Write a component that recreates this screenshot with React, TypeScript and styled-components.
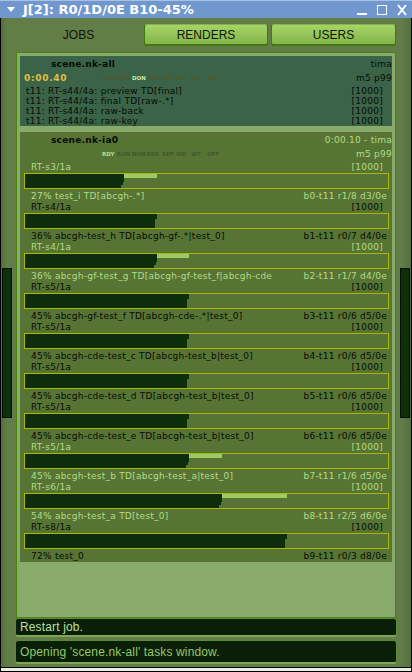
import React from "react";
import styled, { createGlobalStyle } from "styled-components";

const GlobalStyle = createGlobalStyle`
  html, body {
    margin: 0;
    padding: 0;
    background: #000;
  }
  #root {
    width: 412px;
    height: 672px;
  }
`;

const Window = styled.div`
  width: 412px;
  height: 672px;
  box-sizing: border-box;
  display: flex;
  flex-direction: column;
  background: #000;
  overflow: hidden;
  padding: 0 1px;
`;

const TitleBar = styled.div`
  height: 18px;
  flex: none;
  display: flex;
  align-items: center;
  background: #7198ce;
  color: #fff;
  border-top: 1px solid #a9c2e4;
  box-sizing: border-box;
  padding: 0 5px 0 7px;
  margin: 0 -1px;
`;

const TitleText = styled.div`
  font: bold 13px "DejaVu Sans", sans-serif;
  letter-spacing: 0;
  margin-left: 8px;
  flex: 1;
  white-space: nowrap;
`;

const TitleButtons = styled.div`
  display: flex;
  align-items: center;
  gap: 10px;
`;

const Body = styled.div`
  flex: 1;
  display: flex;
  background: linear-gradient(90deg, #566f3f 0, #637d48 6px, #637d48 400px, #566f3f 410px);
  min-height: 0;
`;

const Rail = styled.div`
  width: 10px;
  height: 150px;
  margin: 250px 1px 0 1px;
  flex: none;
  box-sizing: border-box;
  border: 1px solid #050f04;
  background: #0f2f0c;
  &:first-child {
    margin-right: 4px;
  }
  &:last-child {
    margin-left: 4px;
  }
`;

const Center = styled.div`
  flex: 1;
  min-width: 0;
  display: flex;
  flex-direction: column;
  padding-top: 6px;
`;

const Tabs = styled.div`
  height: 22px;
  display: flex;
  gap: 3px;
  flex: none;
`;

const Tab = styled.div<{ $active?: boolean }>`
  width: 125px;
  height: 22px;
  box-sizing: border-box;
  display: flex;
  align-items: center;
  justify-content: center;
  font: 12px "Liberation Sans", sans-serif;
  color: #0c160a;
  border-radius: 3px;
  &:nth-child(2) {
    width: 124px;
  }
  ${(p) =>
    p.$active
      ? `
    background: none;
  `
      : `
    background: linear-gradient(#a6d466, #84b44a);
    border: 1px solid #3f7a0c;
    border-top-color: #86b34a;
    border-bottom: 2px solid #3f7a0c;
  `}
`;

const ListFrame = styled.div`
  height: 566px;
  margin-top: 6px;
  flex: none;
  box-sizing: border-box;
  border: 1px solid #4c8412;
  background: #88ab6b;
  padding: 3px;
  display: flex;
  flex-direction: column;
  gap: 6px;
`;

const Card = styled.div<{ $tone: "dark" | "olive" }>`
  background: ${(p) => (p.$tone === "dark" ? "#3a6347" : "#587435")};
  font: 9px "DejaVu Sans", sans-serif;
  letter-spacing: 0.25px;
  color: #000;
  padding: 0 0 1px;
`;

const CardHead = styled.div`
  display: flex;
  justify-content: space-between;
  align-items: center;
  height: 15px;
  box-sizing: border-box;
  padding: 1px 0 0 31px;
`;

const CardName = styled.div`
  font: bold 9px "DejaVu Sans", sans-serif;
  letter-spacing: 0.25px;
  color: #060c04;
`;

const CardMeta = styled.div<{ $light?: boolean }>`
  color: ${(p) => (p.$light ? "#b2dc88" : "#060c04")};
`;

const StateRow = styled.div`
  display: flex;
  align-items: center;
  height: 14px;
`;

const Timer = styled.div`
  width: 82px;
  flex: none;
  padding-left: 4px;
  box-sizing: border-box;
  font: bold 9px "DejaVu Sans", sans-serif;
  letter-spacing: 0.7px;
  color: #e4bd43;
`;

const States = styled.div`
  flex: 1;
  display: flex;
  font: bold 5.5px "DejaVu Sans", sans-serif;
  letter-spacing: 0;
`;

const State = styled.span<{ $color: string; $w: number }>`
  color: ${(p) => p.$color};
  width: ${(p) => p.$w}px;
  flex: none;
`;

const Task = styled.div`
  display: flex;
  justify-content: space-between;
  height: 10px;
  line-height: 12px;
  padding: 0 9px 0 6px;
  color: #060c04;
`;

const JobBlock = styled.div<{ $light: boolean }>`
  color: ${(p) => (p.$light ? "#b2dc88" : "#060c04")};
`;

const JobLine = styled.div`
  display: flex;
  justify-content: space-between;
  height: 10px;
  line-height: 12px;
  margin-bottom: 2px;
  padding: 0 9px 0 11px;
`;

const JobFoot = styled(JobLine)`
  padding-right: 5px;
  height: 12px;
  line-height: 14px;
  margin-bottom: 0;
`;

const Bar = styled.div`
  width: 365px;
  height: 16px;
  margin: 0 0 0 4px;
  box-sizing: border-box;
  border: 1px solid #a8b80a;
  position: relative;
  background: #587435;
`;

const BarDone = styled.div<{ $width: number; $top: number; $height: number }>`
  position: absolute;
  left: 0;
  top: ${(p) => p.$top}px;
  height: ${(p) => p.$height}px;
  width: ${(p) => p.$width}px;
  background: #0e2d0b;
`;

const BarRun = styled.div<{ $left: number; $width: number }>`
  position: absolute;
  top: 0;
  height: 4px;
  left: ${(p) => p.$left}px;
  width: ${(p) => p.$width}px;
  background: #9ccc62;
`;

const Notice = styled.div<{ $tall?: boolean; $light?: boolean }>`
  height: ${(p) => (p.$tall ? 24 : 19)}px;
  box-sizing: border-box;
  flex: none;
  display: flex;
  align-items: center;
  margin: ${(p) => (p.$tall ? 3 : 0)}px -1px 0;
  padding-left: 4px;
  font: 12px "Liberation Sans", sans-serif;
  letter-spacing: 0.14px;
  background: #0b1f08;
  border: 1px solid #5d8a3a;
  border-bottom: 2px solid #7da655;
  border-radius: 3px;
  color: ${(p) => (p.$light ? "#96c86a" : "#bddf9c")};
`;

const BottomEdge = styled.div`
  height: 3px;
  flex: none;
  background: #e8efe0;
  margin: 1px 0 1px;
`;

const pctWidth = (pct: number) => Math.round((363 * pct) / 100);

const tasks = ["preview TD[final]", "final TD[raw-.*]", "raw-back", "raw-key"];

const stateLabels: [string, number][] = [
  ["RDY", 15],
  ["RUN", 15],
  ["DON", 15],
  ["ERR", 15],
  ["SEP", 14],
  ["WD", 15],
  ["WT", 16],
  ["OFF", 14],
];

type Job = {
  host: string;
  pct: number;
  runTo?: number;
  name: string;
  info: string;
  light?: boolean;
};

const jobs: Job[] = [
  { host: "RT-s3/1a", pct: 27, runTo: 36, name: "test_i TD[abcgh-.*]", info: "b0-t11 r1/8 d3/0e", light: true },
  { host: "RT-s4/1a", pct: 36, name: "abcgh-test_h TD[abcgh-gf-.*|test_0]", info: "b1-t11 r0/7 d4/0e" },
  { host: "RT-s4/1a", pct: 36, runTo: 45, name: "abcgh-gf-test_g TD[abcgh-gf-test_f|abcgh-cde", info: "b2-t11 r1/7 d4/0e", light: true },
  { host: "RT-s5/1a", pct: 45, name: "abcgh-gf-test_f TD[abcgh-cde-.*|test_0]", info: "b3-t11 r0/6 d5/0e" },
  { host: "RT-s5/1a", pct: 45, name: "abcgh-cde-test_c TD[abcgh-test_b|test_0]", info: "b4-t11 r0/6 d5/0e" },
  { host: "RT-s5/1a", pct: 45, name: "abcgh-cde-test_d TD[abcgh-test_b|test_0]", info: "b5-t11 r0/6 d5/0e" },
  { host: "RT-s5/1a", pct: 45, name: "abcgh-cde-test_e TD[abcgh-test_b|test_0]", info: "b6-t11 r0/6 d5/0e" },
  { host: "RT-s5/1a", pct: 45, runTo: 54, name: "abcgh-test_b TD[abcgh-test_a|test_0]", info: "b7-t11 r1/6 d5/0e", light: true },
  { host: "RT-s6/1a", pct: 54, runTo: 72, name: "abcgh-test_a TD[test_0]", info: "b8-t11 r2/5 d6/0e", light: true },
  { host: "RT-s8/1a", pct: 72, name: "test_0", info: "b9-t11 r0/3 d8/0e" },
];

const ProgressBar = ({ pct, runTo }: { pct: number; runTo?: number }) => {
  const w = pctWidth(pct);
  if (runTo) {
    return (
      <Bar>
        <BarDone $top={0} $height={8} $width={w + 1} />
        <BarDone $top={8} $height={3} $width={w} />
        <BarDone $top={11} $height={3} $width={w - 2} />
        <BarRun $left={w + 1} $width={pctWidth(runTo) - w} />
      </Bar>
    );
  }
  return (
    <Bar>
      <BarDone $top={0} $height={5} $width={w + 1} />
      <BarDone $top={5} $height={9} $width={w - 1} />
    </Bar>
  );
};

const App = () => (
  <>
    <GlobalStyle />
    <Window>
      <TitleBar>
        <svg width="8" height="6" viewBox="0 0 8 6">
          <path d="M0 0h8L4 5z" fill="#fff" />
        </svg>
        <TitleText>J[2]: R0/1D/0E B10-45%</TitleText>
        <TitleButtons>
          <svg width="10" height="12" viewBox="0 0 10 12">
            <rect x="0" y="9" width="10" height="2" fill="#fff" />
          </svg>
          <svg width="10" height="12" viewBox="0 0 10 12">
            <rect x="0.5" y="1.5" width="9" height="9" fill="none" stroke="#fff" />
          </svg>
          <svg width="10" height="12" viewBox="0 0 10 12">
            <path d="M1 1l8 10M9 1l-8 10" stroke="#fff" strokeWidth="2" />
          </svg>
        </TitleButtons>
      </TitleBar>
      <Body>
        <Rail />
        <Center>
          <Tabs>
            <Tab $active>JOBS</Tab>
            <Tab>RENDERS</Tab>
            <Tab>USERS</Tab>
          </Tabs>
          <ListFrame>
            <Card $tone="dark">
              <CardHead>
                <CardName>scene.nk-all</CardName>
                <CardMeta>tima</CardMeta>
              </CardHead>
              <StateRow>
                <Timer>0:00.40</Timer>
                <States>
                  {stateLabels.map(([label, w]) => (
                    <State key={label} $w={w} $color={label === "DON" ? "#c9eda2" : "#4f5a34"}>
                      {label}
                    </State>
                  ))}
                </States>
                <CardMeta>m5 p99</CardMeta>
              </StateRow>
              {tasks.map((t) => (
                <Task key={t}>
                  <span>t11: RT-s44/4a: {t}</span>
                  <span>[1000]</span>
                </Task>
              ))}
            </Card>
            <Card $tone="olive">
              <CardHead>
                <CardName>scene.nk-ia0</CardName>
                <CardMeta $light>0:00.10 - tima</CardMeta>
              </CardHead>
              <StateRow>
                <Timer />
                <States>
                  {stateLabels.map(([label, w]) => (
                    <State key={label} $w={w} $color={label === "RDY" ? "#b5df8c" : "#3f5a2c"}>
                      {label}
                    </State>
                  ))}
                </States>
                <CardMeta $light>m5 p99</CardMeta>
              </StateRow>
              {jobs.map((job) => (
                <JobBlock key={job.info} $light={!!job.light}>
                  <JobLine>
                    <span>{job.host}</span>
                    <span>[1000]</span>
                  </JobLine>
                  <ProgressBar pct={job.pct} runTo={job.runTo} />
                  <JobFoot>
                    <span>
                      {job.pct}% {job.name}
                    </span>
                    <span>{job.info}</span>
                  </JobFoot>
                </JobBlock>
              ))}
            </Card>
          </ListFrame>
          <Notice>Restart job.</Notice>
          <Notice $tall $light>
            Opening 'scene.nk-all' tasks window.
          </Notice>
        </Center>
        <Rail />
      </Body>
      <BottomEdge />
    </Window>
  </>
);

export default App;
